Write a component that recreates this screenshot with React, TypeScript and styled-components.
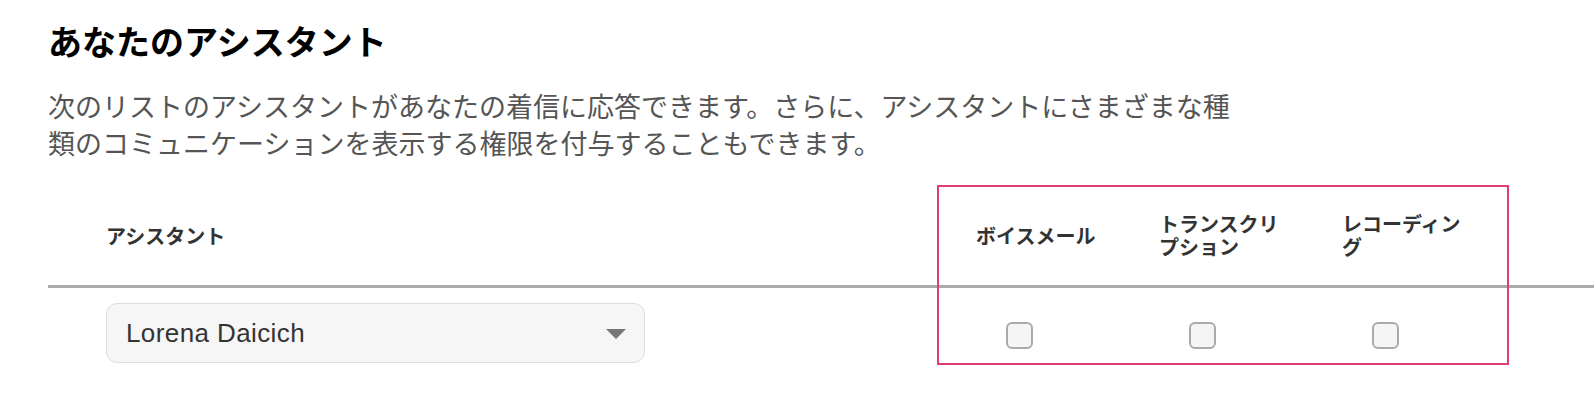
import React from "react";
import styled, { createGlobalStyle } from "styled-components";

const GlobalStyle = createGlobalStyle`
  html, body {
    margin: 0;
    padding: 0;
    background: #ffffff;
  }
  body {
    font-family: "Noto Sans CJK JP", "Noto Sans", sans-serif;
    color: #333;
  }
`;

const Page = styled.div`
  padding: 18px 0 0 48px;
  box-sizing: border-box;
  width: 1594px;
  height: 408px;
  overflow: hidden;
`;

const Title = styled.h1`
  margin: 0;
  font-family: "Noto Sans CJK JP", sans-serif;
  font-size: 34px;
  line-height: 46px;
  font-weight: 700;
  color: #000;
`;

const Description = styled.p`
  margin: 23px 0 0 0;
  width: 1200px;
  font-family: "Noto Sans CJK JP", sans-serif;
  font-size: 27px;
  line-height: 37px;
  font-weight: 400;
  color: #555;
`;

const Table = styled.div`
  position: relative;
  margin-top: 24px;
`;

const Row = styled.div<{ $header?: boolean }>`
  display: grid;
  grid-template-columns: 909px 183px 183px 183px 1fr;
  align-items: center;
  height: ${(p) => (p.$header ? "100px" : "90px")};
  border-bottom: ${(p) => (p.$header ? "3px solid #aaaaaa" : "none")};
`;

const HeaderCell = styled.div<{ $first?: boolean }>`
  padding-left: ${(p) => (p.$first ? "58px" : "19px")};
  max-width: 130px;
  font-family: "Noto Sans CJK JP", sans-serif;
  font-size: 20px;
  line-height: 23px;
  font-weight: 700;
  color: #333;
`;

const SelectCell = styled.div`
  padding-left: 58px;
`;

const Select = styled.div`
  display: flex;
  align-items: center;
  justify-content: space-between;
  box-sizing: border-box;
  width: 539px;
  height: 60px;
  padding: 0 18px 0 19px;
  border: 1.5px solid #dddddd;
  border-radius: 11px;
  background: #f6f6f6;
  font-family: "Liberation Sans", "Noto Sans CJK JP", sans-serif;
  font-size: 26px;
  letter-spacing: 0.4px;
  color: #333;
`;

const Caret = styled.span`
  width: 0;
  height: 0;
  border-left: 10px solid transparent;
  border-right: 10px solid transparent;
  border-top: 10px solid #777;
  margin-top: 2px;
`;

const CheckCell = styled.div`
  padding-left: 49px;
  display: flex;
  align-items: center;
`;

const Checkbox = styled.span`
  display: block;
  box-sizing: border-box;
  width: 27px;
  height: 27px;
  margin-top: 5px;
  border: 2px solid #aaaaaa;
  border-radius: 6px;
  background: #f5f5f5;
`;

const Highlight = styled.div`
  position: absolute;
  left: 889px;
  top: 0;
  width: 572px;
  height: 180px;
  box-sizing: border-box;
  border: 2px solid #dd3f74;
  pointer-events: none;
`;

const columns = ["ボイスメール", "トランスクリプション", "レコーディング"];

export default function App() {
  return (
    <>
      <GlobalStyle />
      <Page>
        <Title>あなたのアシスタント</Title>
        <Description>
          次のリストのアシスタントがあなたの着信に応答できます。さらに、アシスタントにさまざまな種類のコミュニケーションを表示する権限を付与することもできます。
        </Description>
        <Table>
          <Row $header>
            <HeaderCell $first>アシスタント</HeaderCell>
            {columns.map((c) => (
              <HeaderCell key={c}>{c}</HeaderCell>
            ))}
            <div />
          </Row>
          <Row>
            <SelectCell>
              <Select>
                <span>Lorena Daicich</span>
                <Caret />
              </Select>
            </SelectCell>
            {columns.map((c) => (
              <CheckCell key={c}>
                <Checkbox />
              </CheckCell>
            ))}
            <div />
          </Row>
          <Highlight />
        </Table>
      </Page>
    </>
  );
}
